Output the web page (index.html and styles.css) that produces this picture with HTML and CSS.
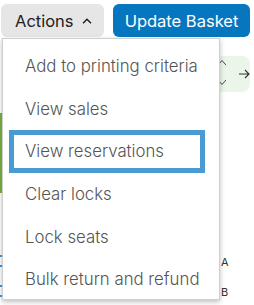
FILE: index.html
```html
<!DOCTYPE html>
<html>
<head>
<meta charset="utf-8">
<link rel="stylesheet" href="styles.css">
</head>
<body>
<div class="toolbar">
  <button class="btn btn-actions">Actions
    <svg class="caret" width="10" height="6" viewBox="0 0 10 6"><polyline points="1,5.2 5,1.2 9,5.2" fill="none" stroke="#222" stroke-width="1.5"/></svg>
  </button>
  <button class="btn btn-primary">Update Basket</button>
</div>
<div class="page">
  <div class="nav-row">
    <div class="nav-box">
      <div class="sort">
        <svg width="8" height="36" viewBox="0 0 8 36"><polyline points="0,9 4,4.5 8,9" fill="none" stroke="#444" stroke-width="1"/><polyline points="0,24 4,28.5 8,24" fill="none" stroke="#444" stroke-width="1"/></svg>
      </div>
      <svg class="arrow" width="12" height="10" viewBox="0 0 12 10"><path d="M1 5H11M7 1L11 5L7 9" fill="none" stroke="#333" stroke-width="1.1"/></svg>
    </div>
  </div>
  <div class="card-green"></div>
  <div class="seat-rows">
    <div class="seat-row"><span class="dash"></span><span class="dash"></span><span class="seat-label">A</span></div>
    <div class="seat-row"><span class="dash"></span><span class="dash"></span><span class="seat-label">B</span></div>
  </div>
  <ul class="menu">
    <li class="menu-item">Add to printing criteria</li>
    <li class="menu-item">View sales</li>
    <li class="menu-item focused">View reservations</li>
    <li class="menu-item">Clear locks</li>
    <li class="menu-item">Lock seats</li>
    <li class="menu-item">Bulk return and refund</li>
  </ul>
</div>
</body>
</html>
```
FILE: styles.css
```css
html, body {
  margin: 0;
  padding: 0;
  background: #ffffff;
  font-family: Inter, "Open Sans", sans-serif;
  width: 254px;
  height: 305px;
  overflow: hidden;
}
.toolbar {
  display: flex;
  gap: 9px;
  padding: 4px 0 0 1px;
}
.btn {
  height: 33px;
  border: none;
  border-radius: 6px;
  font-family: Inter, "Open Sans", sans-serif;
  font-size: 16.5px;
  padding: 0;
  display: flex;
  align-items: center;
}
.btn-actions {
  width: 103px;
  background: #e6e6e6;
  color: #222;
  padding-left: 14px;
  gap: 8px;
}
.btn-primary {
  width: 137px;
  background: #0677bf;
  color: #ffffff;
  justify-content: center;
}
.page {
  position: relative;
  height: 268px;
}
.nav-row {
  display: flex;
  justify-content: flex-end;
  padding: 19px 4px 0 0;
}
.nav-box {
  width: 52px;
  height: 36px;
  background: #eaf6ea;
  border-radius: 8px;
  display: flex;
  align-items: center;
  gap: 12px;
  padding-left: 20px;
  box-sizing: border-box;
}
.sort { display: flex; }
.card-green {
  margin-top: 21px;
  height: 80px;
  border-left: 3px solid #7cb342;
}
.seat-rows {
  display: flex;
  flex-direction: column;
  gap: 8px;
  margin-top: 62px;
}
.seat-row {
  position: relative;
  height: 22px;
  display: flex;
  flex-direction: column;
  gap: 8px;
}
.dash {
  width: 2px;
  height: 2px;
  background: #3a9ad9;
}
.seat-label {
  position: absolute;
  left: 221px;
  top: 0;
  font-size: 11px;
  color: #333;
}
.menu {
  position: absolute;
  left: 2px;
  top: 1px;
  width: 218px;
  height: 262px;
  margin: 0;
  padding: 6px 0 0 0;
  list-style: none;
  background: #ffffff;
  border: 1px solid #cfcfcf;
  box-shadow: 0 2px 5px rgba(0,0,0,0.25);
  box-sizing: border-box;
}
.menu-item {
  height: 42.6px;
  box-sizing: border-box;
  display: flex;
  align-items: center;
  font-size: 16.8px;
  font-weight: 300;
  color: #555555;
  margin-right: 14px;
  margin-left: 6px;
  padding-left: 16px;
}
.menu-item.focused {
  border: 5px solid #4a9ad4;
  padding-left: 11px;
}
```
